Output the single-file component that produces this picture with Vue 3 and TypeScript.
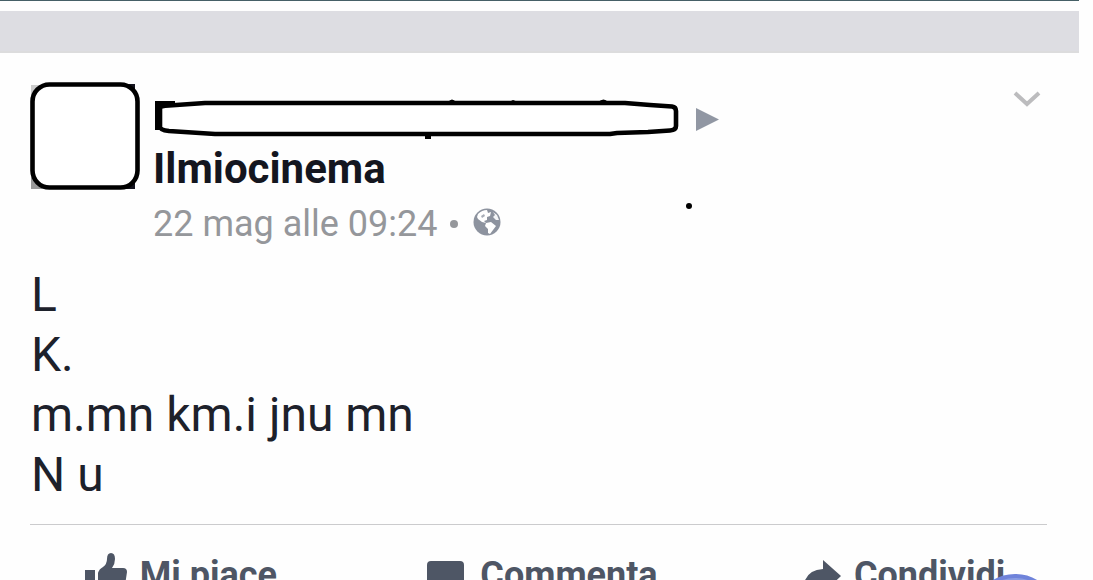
<script setup lang="ts">
interface Post {
  author: string
  date: string
  lines: string[]
}

const post: Post = {
  author: 'Ilmiocinema',
  date: '22 mag alle 09:24',
  lines: ['L', 'K.', 'm.mn km.i jnu mn', 'N u'],
}
</script>

<template>
  <main class="feed">
    <div class="edge"></div>
    <div class="separator"></div>
    <article class="post">
      <header class="head">
        <svg class="avatar" viewBox="0 0 110 108" aria-hidden="true">
          <path d="M1 3h12L1 15z" fill="#ccc" />
          <path d="M1 95l12 12H1z" fill="#999" />
          <path d="M94 2h11v11zM105 93v14H92z" fill="#14141f" />
          <rect x="2.5" y="2.5" width="105" height="103" rx="17" fill="#fff" stroke="#000" stroke-width="4.6" />
        </svg>
        <div class="info">
          <div class="names">
            <svg class="covered" viewBox="0 0 524 46" aria-hidden="true">
              <path d="M0 3h20v6L8 14v14l-3 4H0z" fill="#000" />
              <path
                d="M5 10Q5 8 14 7.500L50 5H470L495 7L517 8.500Q521 9 521 13V28Q521 32 515 32.500L493 34L462 35L455 36H60L14 33Q5 32 5 29Z"
                fill="#fff" stroke="#000" stroke-width="4.600" stroke-linejoin="round" />
              <path d="M293 4q4-5 8 0zM354 4l4-2 5 2zM443 4q6-5 10 0zM270 36h6v5h-6z" fill="#000" />
            </svg>
            <svg class="arrow" viewBox="0 0 23 23" aria-hidden="true"><path d="M0 0L23 11.500L0 23z" fill="#9197a3" /></svg>
          </div>
          <h1 class="author">{{ post.author }}</h1>
          <p class="meta">
            <span>{{ post.date }}</span>
            <span class="bullet"></span>
            <svg class="globe" viewBox="0 0 28 28" aria-label="Pubblico" role="img">
              <circle cx="14" cy="14" r="13.500" fill="#8d939f" />
              <path d="M5 6Q9 2 14 2L15 5L18 4L17 8L14 9L14 12L11 13L13 15L9 14L5 11L4 9Z" fill="#fff" />
              <path d="M13 15L18 14L23 18L20 22L17 26L15 25L15 21L12 18Z" fill="#fff" />
              <path d="M20 4L24 7L26 12L23 12L20 9L22 7Z" fill="#f4f5f7" />
              <path d="M8 8l3-2 1 2-3 2z" fill="#a8adb7" />
            </svg>
          </p>
        </div>
        <button class="menu" type="button" aria-label="Opzioni">
          <svg viewBox="0 0 28 18" aria-hidden="true"><path d="M2 3L14 14L26 3" fill="none" stroke="#bcbcbe" stroke-width="4" /></svg>
        </button>
        <span class="speck"></span>
      </header>
      <div class="body">
        <p v-for="line in post.lines" :key="line">{{ line }}</p>
      </div>
    </article>
    <footer class="actions">
      <button type="button">
        <svg class="like" viewBox="0 0 42 42" aria-hidden="true">
          <path d="M0 17H10V42H0zM13 42V20Q14 16 18 14Q22 11 22 6Q22 0 26 0Q30 0 30 6Q30 11 27 15H38Q42 15 42 19L39 39Q38 42 34 42Z" fill="#4e5665" />
        </svg>
        <span>Mi piace</span>
      </button>
      <button type="button">
        <svg class="comment" viewBox="0 0 38 38" aria-hidden="true">
          <path d="M4 0H33Q37 0 37 4V26Q37 30 33 30H19L10 38V30H4Q0 30 0 26V4Q0 0 4 0Z" fill="#4e5665" />
        </svg>
        <span>Commenta</span>
      </button>
      <button type="button">
        <svg class="share" viewBox="0 0 38 34" aria-hidden="true">
          <path d="M20 0L38 16L20 33V23Q7 22 0 32Q0 10 20 9Z" fill="#4e5665" />
        </svg>
        <span>Condividi</span>
      </button>
    </footer>
    <div class="bubble"></div>
  </main>
</template>

<style>
body {
  margin: 0;
  overflow: hidden;
  background: #fefefe;
}
</style>

<style scoped>
.feed {
  position: relative;
  height: 100vh;
  overflow: hidden;
  font-family: Roboto, "Liberation Sans", sans-serif;
  color: #1d212b;
}
.edge {
  height: 1px;
  margin-right: 14px;
  background: #455f66;
}
.separator {
  box-sizing: border-box;
  height: 42px;
  margin: 10px 14px 0 0;
  border-bottom: 2px solid #dcdcdd;
  background: #dddde2;
}
.post {
  margin: 29px 46px 0 30px;
  padding-bottom: 19px;
  border-bottom: 1px solid #cbcbcd;
}
.head {
  position: relative;
  display: flex;
  align-items: flex-start;
}
.avatar {
  flex: none;
  width: 110px;
  height: 108px;
  margin-right: 13px;
}
.info {
  flex: 1;
  min-width: 0;
}
.names {
  display: flex;
  align-items: center;
  height: 46px;
  margin-top: 16px;
}
.covered {
  width: 524px;
  height: 46px;
  margin-left: 2px;
}
.arrow {
  width: 23px;
  height: 23px;
  margin: 0 0 3px 17px;
}
.author {
  margin: 0;
  font-size: 42px;
  line-height: 50px;
  font-weight: 700;
  color: #14161f;
}
.meta {
  display: flex;
  align-items: center;
  margin: 6px 0 0;
  font-size: 36px;
  line-height: 48px;
  color: #95979b;
}
.bullet {
  width: 8px;
  height: 8px;
  margin: 0 15px 0 13px;
  border-radius: 50%;
  background: #95979b;
}
.globe {
  width: 28px;
  height: 28px;
  margin-bottom: 4px;
}
.menu {
  width: 28px;
  height: 18px;
  margin: 8px 6px 0 0;
  padding: 0;
  border: 0;
  background: none;
}
.menu svg {
  display: block;
}
.speck {
  position: absolute;
  left: 656px;
  top: 121px;
  width: 6px;
  height: 6px;
  border-radius: 50%;
  background: #000;
}
.body {
  margin: 17px 0 0 1px;
  font-size: 48px;
  line-height: 60px;
}
.body p {
  margin: 0;
}
.actions {
  display: grid;
  grid-template-columns: repeat(3, 1fr);
  margin: 28px 8px 0 0;
}
.actions button {
  display: flex;
  align-items: flex-start;
  justify-content: center;
  padding: 0;
  border: 0;
  background: none;
  font: 700 36px/44px Roboto, "Liberation Sans", sans-serif;
  color: #4e5665;
}
.like {
  width: 42px;
  height: 42px;
  margin-right: 13px;
}
.comment {
  width: 38px;
  height: 38px;
  margin: 8px 15px 0 0;
}
.share {
  width: 38px;
  height: 34px;
  margin: 7px 13px 0 0;
}
.bubble {
  position: absolute;
  right: 35px;
  bottom: -80px;
  width: 86px;
  height: 86px;
  box-sizing: border-box;
  border: 4px solid #6f83da;
  border-radius: 50%;
  background: #8b9de2;
}
</style>
